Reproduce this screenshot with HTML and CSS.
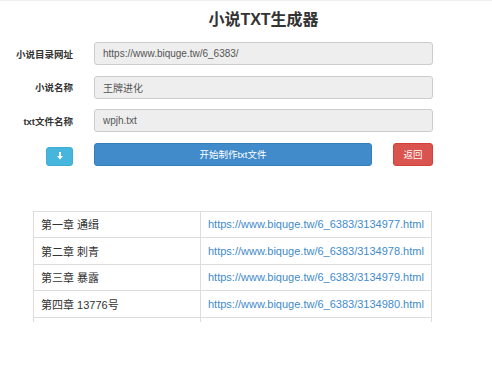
FILE: index.html
```html
<!DOCTYPE html>
<html lang="zh-CN">
<head>
    <meta charset="UTF-8">
    <meta name="viewport" content="width=device-width, initial-scale=1.0">
    <title>小说TXT生成器</title>
    <link rel="stylesheet" href="styles.css">
</head>
<body>
    <div class="topline"></div>

    <h1 class="title">小说TXT生成器</h1>

    <form class="form-grid">
        <label for="url">小说目录网址</label>
        <input type="text" id="url" value="https://www.biquge.tw/6_6383/" readonly>

        <label for="name">小说名称</label>
        <input type="text" id="name" value="王牌进化" readonly>

        <label for="file">txt文件名称</label>
        <input type="text" id="file" value="wpjh.txt" readonly>

        <div class="btn-cell">
            <button type="button" class="btn btn-info">
                <svg width="6" height="8" viewBox="0 0 6 8">
                    <rect x="2" y="0" width="2" height="4.5" fill="#fff"/>
                    <polygon points="0,4 6,4 3,7.5" fill="#fff"/>
                </svg>
            </button>
        </div>
        <div class="actions">
            <button type="button" class="btn btn-primary">开始制作txt文件</button>
            <button type="button" class="btn btn-danger">返回</button>
        </div>
    </form>

    <div class="chapter-list">
        <table>
            <tr><td>第一章 通缉</td><td><a href="#">https://www.biquge.tw/6_6383/3134977.html</a></td></tr>
            <tr><td>第二章 刺青</td><td><a href="#">https://www.biquge.tw/6_6383/3134978.html</a></td></tr>
            <tr><td>第三章 暴露</td><td><a href="#">https://www.biquge.tw/6_6383/3134979.html</a></td></tr>
            <tr><td>第四章 13776号</td><td><a href="#">https://www.biquge.tw/6_6383/3134980.html</a></td></tr>
            <tr><td></td><td></td></tr>
        </table>
    </div>
</body>
</html>
```

FILE: styles.css
```css
body {
    font-family: "Liberation Sans", "Noto Sans CJK SC", sans-serif;
    background: #fff;
    color: #333;
    margin: 0;
}

.topline {
    height: 1px;
    background: #f0f0f0;
}

.title {
    width: 339px;
    margin: 0 0 12px 94px;
    padding-top: 9px;
    font-size: 16px;
    line-height: 20px;
    font-weight: bold;
    text-align: center;
    color: #333;
}

.form-grid {
    display: grid;
    grid-template-columns: 73px 339px;
    column-gap: 21px;
    row-gap: 10.5px;
    margin: 0;
}

label {
    display: flex;
    align-items: center;
    justify-content: flex-end;
    font-size: 9.5px;
    font-weight: bold;
    color: #333;
    white-space: nowrap;
}

input {
    box-sizing: border-box;
    height: 23px;
    width: 100%;
    padding: 0 8px;
    background: #eee;
    border: 1px solid #ccc;
    border-radius: 3px;
    font-family: inherit;
    font-size: 10px;
    color: #555;
    outline: none;
}

.btn-cell {
    display: flex;
    justify-content: flex-end;
    align-items: center;
    padding-top: 4px;
}

.actions {
    display: flex;
    gap: 21px;
}

.btn {
    box-sizing: border-box;
    height: 23px;
    border-radius: 3px;
    border: 1px solid transparent;
    font-family: inherit;
    font-size: 9.5px;
    color: #fff;
    padding: 0;
    cursor: pointer;
}

.btn-info {
    width: 27px;
    height: 19px;
    background: #46b6dc;
    border-color: #3eacd3;
    display: flex;
    align-items: center;
    justify-content: center;
}

.btn-primary {
    width: 278px;
    background: #428bca;
    border-color: #357ebd;
}

.btn-danger {
    width: 40px;
    background: #d9534f;
    border-color: #d43f3a;
}

.chapter-list {
    margin: 45px 0 0 33px;
    width: 399px;
    height: 111px;
    overflow: hidden;
}

table {
    width: 100%;
    border-collapse: collapse;
    font-size: 11px;
}

td {
    height: 26.5px;
    padding: 0 7px;
    border: 1px solid #ddd;
    box-sizing: border-box;
    white-space: nowrap;
}

td:first-child {
    width: 167px;
}

a {
    color: #428bca;
    text-decoration: none;
}
```
